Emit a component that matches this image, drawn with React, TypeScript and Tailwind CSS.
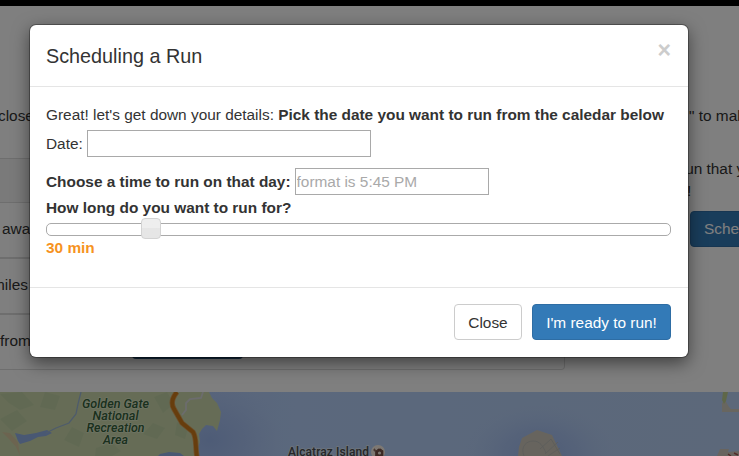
import React from "react";

function PageTable() {
  return (
    <div className="h-[212px] w-[565px] overflow-hidden rounded-br-[4px] border-y border-r border-[#ddd]">
      <div className="h-[43px] bg-[#f5f5f5]" />
      <div className="flex h-[57px] items-center border-b-2 border-t border-b-[#ddd] border-t-[#ddd] pb-[2px] pl-[2px]">away</div>
      <div className="flex h-[56px] items-center border-b-2 border-[#ddd] pb-[2px]">
        <span className="-ml-[8px]">miles</span>
      </div>
      <div className="flex h-[54px] items-start pt-[15px]">
        <span className="w-[132px]">from</span>
        <span className="-mt-[7px] h-[36px] w-[111px] rounded-[4px] bg-[#26527a]" />
      </div>
    </div>
  );
}

function Label({ x, y, w, children }: { x: number; y: number; w: number; children: string }) {
  return (
    <text x={x} y={y} textLength={w} lengthAdjust="spacingAndGlyphs" textAnchor="middle" className="fill-[#35613a] stroke-[#e2ecd0] font-['Roboto'] text-[12px] font-medium italic [paint-order:stroke]" strokeWidth="1.6" strokeOpacity="0.75" strokeLinejoin="round">
      {children}
    </text>
  );
}

function MapStrip() {
  return (
    <svg width="739" height="64" viewBox="0 0 739 64" className="block">
      <defs>
        <linearGradient id="sea" x1="0" x2="1">
          <stop offset="0.28" stopColor="#b1caf8" />
          <stop offset="0.4" stopColor="#b6d1fa" />
          <stop offset="1" stopColor="#b8d0f4" />
        </linearGradient>
        <radialGradient id="deep">
          <stop offset="0" stopColor="#9cb8ee" />
          <stop offset="0.5" stopColor="#a5bff1" stopOpacity="0.65" />
          <stop offset="1" stopColor="#b0caf5" stopOpacity="0" />
        </radialGradient>
      </defs>
      <rect width="739" height="64" fill="url(#sea)" />
      <ellipse cx="540" cy="62" rx="75" ry="50" fill="url(#deep)" />
      <ellipse cx="210" cy="48" rx="75" ry="60" fill="url(#deep)" />
      <path d="M0 0H209L212 6L217 11L221 20L220 28L217 39L213 34L206 33L202 37L199 42L200 50L197 57L198 64H0Z" fill="#ccd9ad" />
      <path d="M0 2L22 0L34 13L20 18L9 11ZM45 0L60 4L55 18L40 15ZM0 27L17 18L27 29L12 39ZM154 5L167 0L174 12L163 21ZM72 35L84 41L79 55L64 48ZM153 31L165 36L157 47L143 42ZM177 30L188 36L185 47L175 43ZM96 56L112 51L121 59L112 64H95Z" fill="#b9cba0" opacity=".45" />
      <path d="M15 41L24 43L36 41L47 38L52 41L46 44L38 45L30 49L20 52L18 49ZM158 64L160 62L169 60L180 61L184 64Z" fill="#93b0e6" />
      <path d="M46 41L56 36L69 31L76 22L78 12L81 0" fill="none" stroke="#9db7d6" strokeWidth="1.3" />
      <path d="M2 40L10 41L18 50L20 64L16 55L8 46Z" fill="#d8c9a0" />
      <path d="M182 23L186 18L186 11L190 7L201 6L203 0" fill="none" stroke="#d8d8da" strokeWidth="1.8" />
      <path d="M177 0C172 6 171 12 174 17L182 31L193 40C197 46 195 55 197 65" fill="none" stroke="#d9a25c" strokeWidth="5.4" />
      <path d="M177 0C172 6 171 12 174 17L182 31L193 40C197 46 195 55 197 65" fill="none" stroke="#cf7a1a" strokeWidth="3.8" />
      <Label x={115.5} y={16} w={67}>Golden Gate</Label>
      <Label x={115.5} y={28} w={46}>National</Label>
      <Label x={115.5} y={40} w={58}>Recreation</Label>
      <Label x={115.5} y={52} w={25}>Area</Label>
      <circle cx="378" cy="60" r="7" fill="#fbf1e6" />
      <text x="288" y="64" textLength="81" className="fill-[#4a4d50] stroke-[#e6eef4] font-['Roboto'] text-[12px] font-medium [paint-order:stroke]" strokeWidth="1.6" strokeOpacity="0.8">Alcatraz Island</text>
      <path d="M375.5 58.5h1.5l1-1.5h3l1 1.5h1v5.5h-7.500ZM373 58h3M374.500 56.500v3" fill="#775048" stroke="#775048" strokeWidth=".7" />
      <circle cx="379.500" cy="61" r="1.600" fill="#fbf1e6" />
      <path d="M518 64L519 55L522 46L537 38L552 43L562 64Z" fill="#cec9bd" />
      <path d="M524 64C520 54 527 49 533 49C540 49 543 54 546 61M540 57L551 47L560 62M545 62L558 50M548 64L560 56" fill="none" stroke="#b8b9b5" strokeWidth=".8" />
      <path d="M722 11L725 8L729 15L731 17H739V20H722Z" fill="#d0ccc0" />
      <path d="M723 0H728L726 9L724 12L722 8Z" fill="#bfce91" />
      <path d="M717 64L720 57H729L728 60L739 59V64Z" fill="#d1c9bf" />
      <path d="M728 62l3 2M734 61l4 2" stroke="#a55953" strokeWidth="1.5" />
    </svg>
  );
}

function Page() {
  return (
    <div className="flex h-[456px] flex-col overflow-hidden bg-white">
      <div className="h-[6px] shrink-0 bg-black" />
      <main className="flex h-[386px] shrink-0 whitespace-nowrap">
        <section className="w-[565px] pt-[99px]">
          <p className="-ml-[2px] mb-[31px]">close</p>
          <PageTable />
        </section>
        <section className="pl-[125px] pt-[99px]">
          <p className="-ml-[1px] mb-[31px]">" to make</p>
          <p className="-ml-[10px]">run that you</p>
          <p className="-ml-[3px]">!</p>
          <button className="mt-[9px] h-[36px] rounded-[4px] border border-[#2e6da4] bg-[#337ab7] px-[13px] text-white">Schedule</button>
        </section>
      </main>
      <MapStrip />
    </div>
  );
}

function Modal() {
  return (
    <section role="dialog" className="absolute left-[30px] top-[25px] flex h-[332px] w-[658px] flex-col rounded-[6px] bg-white shadow-[0_0_0_1px_rgba(0,0,0,0.3),0_5.5px_16.5px_rgba(0,0,0,0.5)]">
      <header className="flex h-[62px] items-start justify-between border-b border-[#e5e5e5] px-[16px] pt-[17px]">
        <h4 className="text-[19.8px] leading-[28px]">Scheduling a Run</h4>
        <button aria-label="Close" className="mr-[1px] mt-[-3px] text-[23.1px] font-bold leading-[23px] text-[#ccc]">×</button>
      </header>
      <div className="h-[200px] px-[16px] pt-[17px]">
        <p className="whitespace-nowrap">Great! let's get down your details: <b>Pick the date you want to run from the caledar below</b></p>
        <label className="mt-[4px] flex h-[27px] items-center gap-[4px]">
          Date:
          <input className="h-[27px] w-[284px] border border-[#a9a9a9]" />
        </label>
        <label className="mt-[11px] flex h-[27px] items-center gap-[4px] font-bold">
          Choose a time to run on that day:
          <input placeholder="format is 5:45 PM" className="h-[27px] w-[194px] border border-[#a9a9a9] px-[1px] font-normal placeholder:text-[#a9a9a9]" />
        </label>
        <p className="mt-[2px] font-bold">How long do you want to run for?</p>
        <div className="mt-[4px] flex h-[13px] w-[625px] items-center rounded-[5px] border border-[#aaa] pl-[94px]">
          <span className="mb-[2px] h-[21px] w-[20px] shrink-0 rounded-[4px] border border-[#d3d3d3] bg-linear-to-b from-[#eee] from-50% to-[#e6e6e6] to-50%" />
        </div>
        <p className="mt-[1px] font-bold text-[#f6931f]">30 min</p>
      </div>
      <footer className="flex h-[70px] justify-end gap-[10px] border-t border-[#e5e5e5] pr-[17px] pt-[16px]">
        <button className="h-[36px] w-[68px] rounded-[4px] border border-[#ccc] bg-white pt-[2px]">Close</button>
        <button className="h-[36px] w-[139px] rounded-[4px] border border-[#2e6da4] bg-[#337ab7] pt-[2px] text-white">I'm ready to run!</button>
      </footer>
    </section>
  );
}

export default function App() {
  return (
    <div className="relative h-[456px] w-[739px] overflow-hidden font-['Liberation_Sans',Arial,sans-serif] text-[15.4px] leading-[22px] text-[#333]">
      <Page />
      <div className="absolute inset-0 bg-black/50" />
      <Modal />
    </div>
  );
}
